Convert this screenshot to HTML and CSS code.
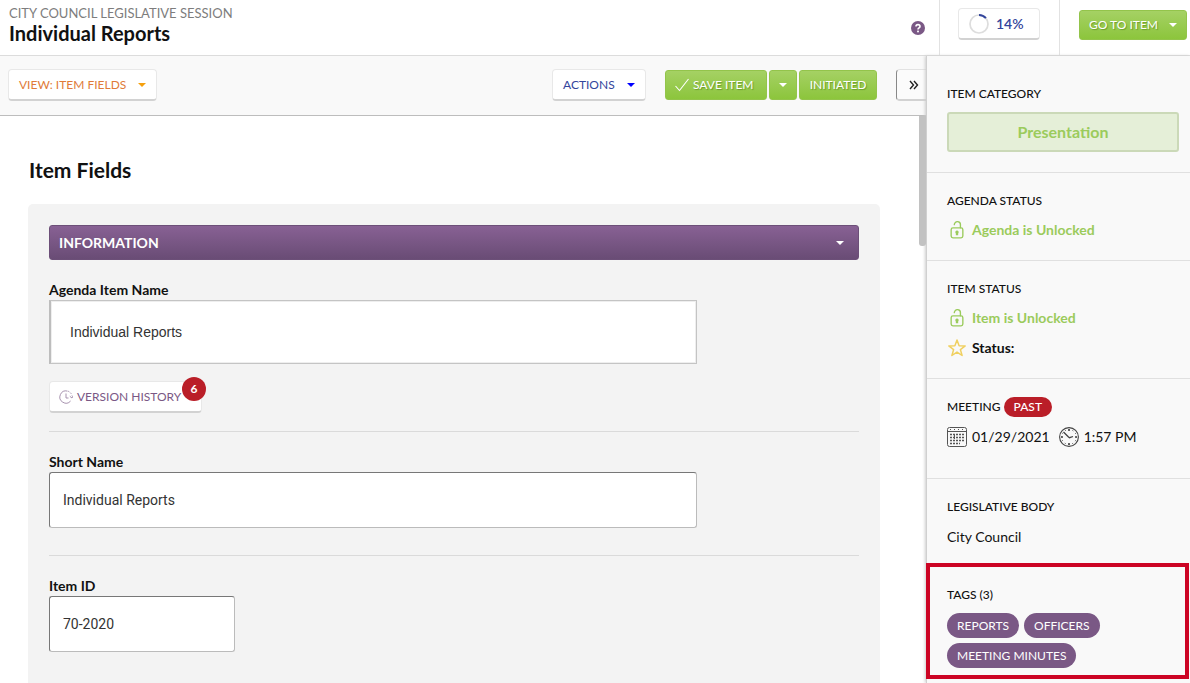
FILE: index.html
```html
<!DOCTYPE html>
<html lang="en">
<head>
<meta charset="utf-8">
<title>Individual Reports</title>
<link rel="stylesheet" href="styles.css">
</head>
<body>
<svg class="defs" aria-hidden="true">
  <symbol id="caret" viewBox="0 0 8 4"><path d="M0 0h8L4 4z" fill="currentColor"/></symbol>
  <symbol id="unlocked" viewBox="0 0 16 20"><g fill="none" stroke="currentColor" stroke-width="1.5"><rect x="1.500" y="7.700" width="13" height="11" rx="2"/><path d="M11.800 7.500V4.500a3.400 3.500 0 0 0-6.800-.5" stroke-linecap="round"/></g><path d="M8 10.500a2 2 0 0 1 1.300 3.400v2H6.700v-2A2 2 0 0 1 8 10.500z" fill="currentColor"/></symbol>
</svg>
<div class="app">
  <header class="header">
    <div class="titles">
      <p class="kicker">CITY COUNCIL LEGISLATIVE SESSION</p>
      <h1 class="title">Individual Reports</h1>
    </div>
    <button class="help" type="button" aria-label="Help">
      <svg width="14" height="14" viewBox="0 0 14 14"><circle cx="7" cy="7" r="7" fill="#7a5885"/><path d="M5 5.400C5 3 9 3 9 5.400 9 7 7 6.900 7 8.500" fill="none" stroke="#fff" stroke-width="1.600"/><rect x="6.100" y="9.600" width="1.800" height="1.700" fill="#fff"/></svg>
    </button>
    <div class="progress-cell">
      <button class="btn btn-light progress" type="button">
        <svg width="20" height="20" viewBox="0 0 20 20" fill="none" stroke-width="1.700"><circle cx="10" cy="10" r="9" stroke="#ddd"/><path d="M10 1a9 9 0 0 1 6.900 3.200" stroke="#33459c" stroke-width="2"/></svg>
        14%
      </button>
    </div>
    <div class="goto-cell">
      <button class="btn btn-green goto" type="button">GO TO ITEM <svg class="caret"><use href="#caret"/></svg></button>
    </div>
  </header>
  <div class="body">
    <main class="main">
      <div class="toolbar">
        <button class="btn btn-light view" type="button">VIEW: ITEM FIELDS <svg class="caret"><use href="#caret"/></svg></button>
        <button class="btn btn-light actions" type="button">ACTIONS <svg class="caret"><use href="#caret"/></svg></button>
        <div class="save-group">
          <button class="btn btn-green save" type="button"><svg width="14" height="14" viewBox="0 0 14 14"><path d="M.5 8l4 4.500L13.500 1" fill="none" stroke="#fff" stroke-width="1.100"/></svg>SAVE ITEM</button>
          <button class="btn btn-green more" type="button" aria-label="More save options"><svg class="caret"><use href="#caret"/></svg></button>
          <button class="btn btn-green initiated" type="button">INITIATED</button>
        </div>
        <button class="collapse" type="button" aria-label="Collapse sidebar"><svg width="10" height="12" viewBox="0 0 10 12"><path d="M1 2l3.500 4L1 10M5 2l3.500 4L5 10" fill="none" stroke="#222" stroke-width="1.400"/></svg></button>
      </div>
      <div class="pane">
        <h2 class="heading">Item Fields</h2>
        <form class="panel">
          <button class="section-bar" type="button">INFORMATION <svg class="caret"><use href="#caret"/></svg></button>
          <div class="field">
            <label class="label" for="name">Agenda Item Name</label>
            <input class="input input-rich" id="name" type="text" value="Individual Reports">
            <button class="btn btn-light history" type="button"><svg width="14" height="14" viewBox="0 0 14 14" fill="none" stroke="#a792ae"><path d="M11.600 11A6.100 6.100 0 1 1 8.500 1.100"/><path d="M9 1.200a6 6 0 0 1 4 4.500" stroke-dasharray="1.500 1.300"/><path d="M7 3.500V8h2.500M10.800 6.300L13 8l1-2"/></svg>VERSION HISTORY<span class="count">6</span></button>
          </div>
          <div class="field field-plain">
            <label class="label" for="short">Short Name</label>
            <input class="input" id="short" type="text" value="Individual Reports">
          </div>
          <div class="field field-plain">
            <label class="label" for="item-id">Item ID</label>
            <input class="input input-short" id="item-id" type="text" value="70-2020">
          </div>
        </form>
        <div class="thumb"></div>
      </div>
    </main>
    <aside class="sidebar">
      <section class="block block-first">
        <h3 class="block-title">ITEM CATEGORY</h3>
        <div class="category">Presentation</div>
      </section>
      <section class="block">
        <h3 class="block-title">AGENDA STATUS</h3>
        <p class="status status-open"><svg class="lock"><use href="#unlocked"/></svg>Agenda is Unlocked</p>
      </section>
      <section class="block">
        <h3 class="block-title">ITEM STATUS</h3>
        <p class="status status-open"><svg class="lock"><use href="#unlocked"/></svg>Item is Unlocked</p>
        <p class="status"><svg class="star" viewBox="0 0 20 20"><path d="M10 2l2.100 5.700 6.100.2-4.800 3.700 1.700 5.900L10 14.100l-5.100 3.400 1.700-5.900L1.800 7.900l6.100-.2z" fill="none" stroke="#f0d060" stroke-width="1.500" stroke-linejoin="round"/></svg>Status:</p>
      </section>
      <section class="block block-meeting">
        <h3 class="block-title">MEETING <span class="past">PAST</span></h3>
        <p class="when">
          <svg width="20" height="20" viewBox="0 0 20 20" fill="none" stroke="#555"><rect x=".5" y=".5" width="19" height="19" rx="2"/><path d="M1 4.500h18"/><path d="M3 2.500h14" stroke-dasharray="1 3"/><path d="M3 7.500h14M3 10.500h14M3 13.500h14M3 16.500h10" stroke-width="1.500" stroke-dasharray="2 1"/><path d="M7.500 7v5"/></svg>
          <span>01/29/2021</span>
          <svg class="clock" width="20" height="20" viewBox="0 0 20 20" fill="none" stroke="#444"><circle cx="10" cy="10" r="9.400" stroke-width="1.100"/><circle cx="10" cy="10" r="7.400" stroke-dasharray="1 2.870" stroke-dashoffset=".5"/><path d="M10 2v2M10 16v2M2 10h2M16 10h2" stroke-width="1.600"/><path d="M4.500 5l5 5 1 .7L14 9.500" stroke-width="1.300"/></svg>
          <span>1:57 PM</span>
        </p>
      </section>
      <section class="block block-body">
        <h3 class="block-title">LEGISLATIVE BODY</h3>
        <p class="when">City Council</p>
      </section>
      <section class="tags">
        <h3 class="block-title">TAGS (3)</h3>
        <ul class="tag-list">
          <li class="tag">REPORTS</li>
          <li class="tag">OFFICERS</li>
          <li class="tag">MEETING MINUTES</li>
        </ul>
      </section>
    </aside>
  </div>
</div>
</body>
</html>
```
FILE: styles.css
```css
* { box-sizing: border-box; }
body { margin: 0; background: #fff; color: #111; font: 14px/20px Lato, sans-serif; }
h1, h2, h3, p, ul { margin: 0; padding: 0; }
button, input { font: inherit; margin: 0; }
button { cursor: pointer; }
svg { flex: none; }
.defs { position: absolute; width: 0; height: 0; }
.app { display: flex; flex-direction: column; height: 100vh; overflow: hidden; }

.header { display: flex; flex: none; height: 56px; border-bottom: 1px solid #dcdcdc; }
.titles { flex: 1; padding: 4px 9px; }
.kicker { font-size: 13px; line-height: 18px; color: #7d7d7d; }
.title { font-size: 20px; line-height: 22px; font-weight: 700; }
.help { display: flex; align-items: center; padding: 0 14px; border: 0; background: none; }
.progress-cell { display: flex; align-items: flex-start; padding: 8px 19px 0 18px; border: solid #e2e2e2; border-width: 0 1px; }
.goto-cell { padding: 10px 3px 0 19px; }

.caret { width: 8px; height: 4px; }
.btn { display: flex; align-items: center; border-radius: 4px; font-size: 12px; line-height: 18px; white-space: nowrap; }
.btn-light { height: 32px; padding: 0 10px; background: #fff; border: 1px solid #e8e8e8; border-bottom: 2px solid #d2d2d2; }
.btn-green { height: 30px; padding: 0 9px; color: #fff; background: linear-gradient(#a5d164, #8cc53c); border: 1px solid #93c44b; border-radius: 3px; text-shadow: 1px 1px 1px #6b9c2c; }
.progress { gap: 7px; width: 82px; font-size: 14px; font-weight: 600; color: #33459c; }
.goto { justify-content: space-between; width: 108px; }
.view { justify-content: space-between; width: 149px; margin-right: auto; color: #e07b39; }
.view .caret { color: #f5a00d; }
.actions { justify-content: space-between; width: 94px; padding: 0 10px; color: #33459c; }
.actions .caret { color: #00f; }
.save-group { display: flex; gap: 2px; }
.save { gap: 4px; width: 102px; }
.more { justify-content: center; width: 28px; }
.initiated { justify-content: center; width: 78px; }

.body { display: flex; flex: 1; min-height: 0; }
.main { display: flex; flex: 1; flex-direction: column; min-width: 0; }
.toolbar { display: flex; flex: none; align-items: center; gap: 19px; height: 60px; padding: 0 0 1px 8px; background: #f9f9f9; border-bottom: 1px solid #bdbdbd; }
.collapse { display: flex; align-items: center; width: 30px; height: 32px; padding: 0 0 0 12px; background: #fbfbfb; border: 1px solid #e2e2e2; border-left-color: #888; border-bottom: 2px solid #d2d2d2; border-right: 0; border-radius: 4px 0 0 4px; }
.pane { position: relative; flex: 1; min-height: 0; overflow: hidden; padding: 42px 46px 0 28px; }
.thumb { position: absolute; top: 0; right: 0; width: 7px; height: 130px; background: #c2c2c2; border-radius: 0 0 3px 3px; }
.heading { padding-left: 1px; font-size: 21px; line-height: 24px; font-weight: 700; }
.panel { margin-top: 22px; padding: 21px; background: #f3f3f3; border-radius: 5px; }
.section-bar { display: flex; align-items: center; justify-content: space-between; width: 100%; height: 35px; padding: 0 14px 0 9px; color: #fff; background: linear-gradient(#886194, #694c75); border: 1px solid #6c4f78; border-radius: 3px; font-weight: 700; }

.field { padding: 20px 0 18px; border-bottom: 1px solid #dadada; }
.field-plain { padding-bottom: 27px; }
.field:last-child { border-bottom: 0; }
.label { display: block; font-weight: 700; }
.input { display: block; width: 80%; height: 56px; padding: 0 13px; color: #333; background: #fff; border: 1px solid #bbb; border-top-color: #777; border-left-color: #777; border-radius: 3px; font-family: Roboto, sans-serif; }
.input-rich { height: 64px; padding: 0 19px; border: 1px solid #c4c4c4; border-left: 2px solid #bdbdbd; border-radius: 0; box-shadow: inset 0 0 0 1px #eee; font-family: "Liberation Sans", Arial, sans-serif; }
.input-short { width: 23%; }
.history { position: relative; gap: 4px; width: 153px; margin-top: 17px; padding: 0 9px; color: #7a5885; }
.count { position: absolute; top: -5px; right: -5px; width: 24px; height: 24px; border-radius: 12px; background: #ba1e28; color: #fff; font-weight: 700; line-height: 24px; text-align: center; }

.sidebar { flex: none; width: 264px; background: #f9f9f9; border-left: 1px solid #d0d0d0; box-shadow: -1px 0 3px #ccc; }
.block { padding: 18px 11px 20px 20px; border-bottom: 1px solid #e0e0e0; }
.block-first { padding-top: 28px; }
.block-meeting { padding-bottom: 31px; }
.block-body { padding-bottom: 16px; border-bottom: 0; }
.block-title { display: flex; align-items: center; gap: 3px; font-size: 12px; line-height: 20px; font-weight: 500; }
.category { margin-top: 8px; border: 2px solid #cbd9b8; border-radius: 3px; background: #e5efd8; color: #9bcb5c; font-size: 16px; line-height: 36px; font-weight: 700; text-align: center; }
.status { display: flex; align-items: center; gap: 5px; margin-top: 9px; font-weight: 700; }
.status + .status { margin-top: 10px; }
.status-open { color: #9bcb5c; }
.lock { width: 20px; height: 18px; }
.star { width: 20px; height: 20px; }
.past { padding: 0 10px; border-radius: 10px; background: #ba1e28; color: #fff; }
.when { display: flex; align-items: center; gap: 5px; margin-top: 10px; }
.clock { margin-left: 4px; }
.tags { margin: 0 1px 0 -1px; padding: 18px 17px 7px; border: 4px solid #cc0424; }
.tag-list { display: flex; flex-wrap: wrap; gap: 5px; margin-top: 8px; list-style: none; }
.tag { padding: 0 10px; border-radius: 13px; background: #7a5885; color: #fff; font-size: 12px; line-height: 25px; }
```
